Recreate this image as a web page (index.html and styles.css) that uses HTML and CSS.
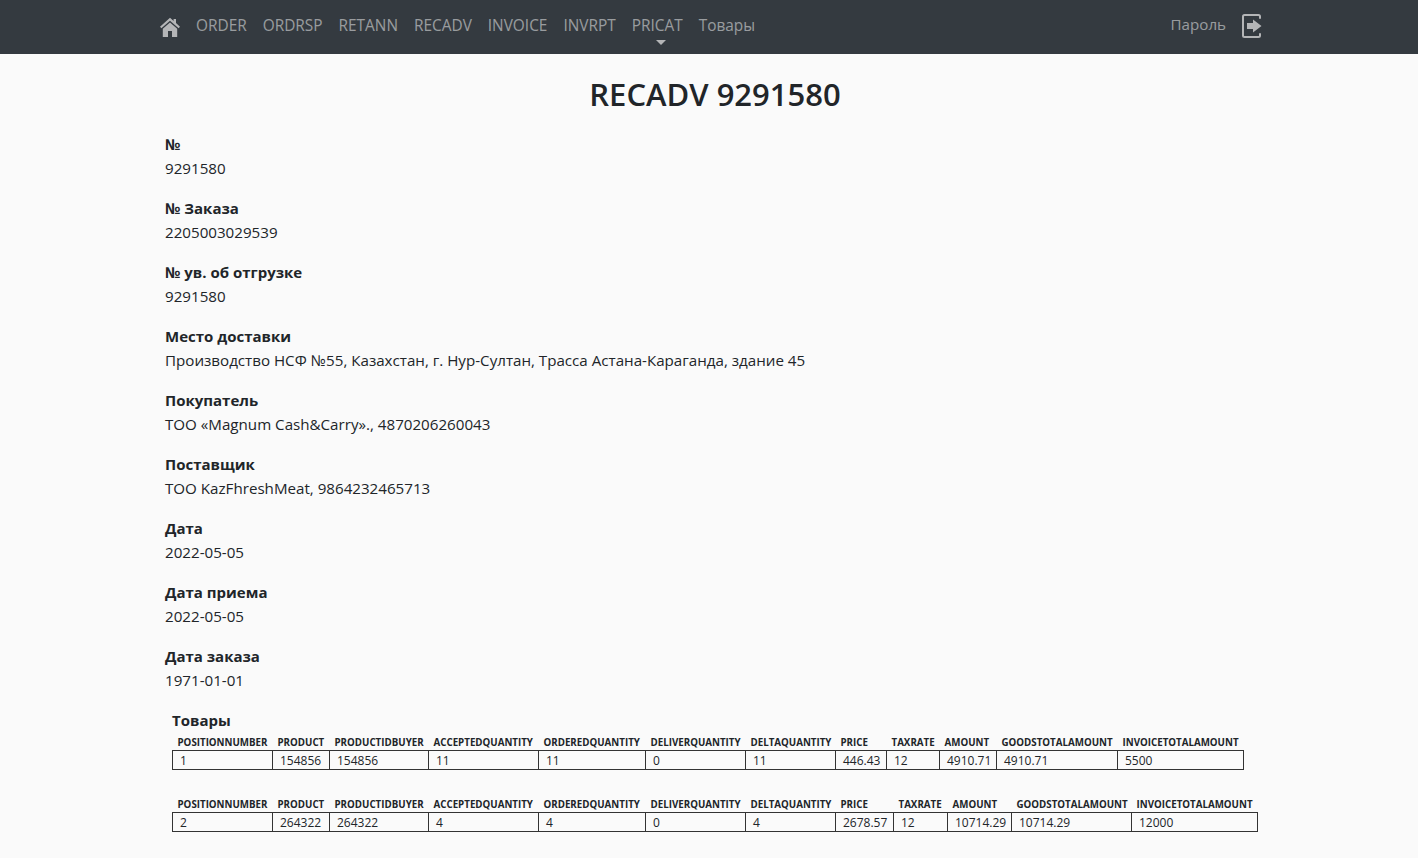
FILE: index.html
```html
<!DOCTYPE html>
<html lang="ru">
<head>
<meta charset="utf-8">
<title>RECADV 9291580</title>
<link rel="stylesheet" href="styles.css">
</head>
<body>
<nav class="navbar">
  <a class="home" href="#" aria-label="Home">
    <svg viewBox="0 0 20 20" width="20" height="20"><path fill="#b4b5b7" d="M10 0.8 L13.6 4 V2 H16 V6.1 L20 9.7 L18.6 11.3 L10 3.7 L1.4 11.3 L0 9.7 Z M10 5.4 L17.2 11.7 V20 H12 V14 H8 V20 H2.8 V11.7 Z"/></svg>
  </a>
  <ul class="menu">
    <li><a href="#">ORDER</a></li>
    <li><a href="#">ORDRSP</a></li>
    <li><a href="#">RETANN</a></li>
    <li><a href="#">RECADV</a></li>
    <li><a href="#">INVOICE</a></li>
    <li><a href="#">INVRPT</a></li>
    <li class="dropdown"><a href="#">PRICAT</a></li>
    <li><a href="#">Товары</a></li>
  </ul>
  <div class="account">
    <a href="#">Пароль</a>
    <svg viewBox="0 0 20 24" width="20" height="24"><path fill="none" stroke="#b4b5b7" stroke-width="2" stroke-linecap="round" stroke-linejoin="round" d="M18 4 V2.5 Q18 1 16.5 1 H2.5 Q1 1 1 2.5 V21.5 Q1 23 2.5 23 H16.5 Q18 23 18 21.500 V20"/><path fill="#b4b5b7" d="M5 9 H11 V5.500 L19.500 12 L11 18.500 V15 H5 Z"/></svg>
  </div>
</nav>
<main class="content">
  <h1>RECADV 9291580</h1>
  <dl class="details">
    <dt>№</dt><dd>9291580</dd>
    <dt>№ Заказа</dt><dd>2205003029539</dd>
    <dt>№ ув. об отгрузке</dt><dd>9291580</dd>
    <dt>Место доставки</dt><dd>Производство НСФ №55, Казахстан, г. Нур-Султан, Трасса Астана-Караганда, здание 45</dd>
    <dt>Покупатель</dt><dd>ТОО «Magnum Cash&amp;Carry»., 4870206260043</dd>
    <dt>Поставщик</dt><dd>ТОО KazFhreshMeat, 9864232465713</dd>
    <dt>Дата</dt><dd>2022-05-05</dd>
    <dt>Дата приема</dt><dd>2022-05-05</dd>
    <dt>Дата заказа</dt><dd>1971-01-01</dd>
  </dl>
  <section class="goods">
    <h2>Товары</h2>
    <table class="first">
      <colgroup><col class="c1"><col class="c2"><col class="c3"><col class="c4"><col class="c5"><col class="c6"><col class="c7"><col class="c8"><col class="c9"><col class="c10"><col class="c11"><col class="c12"></colgroup>
      <thead><tr><th>POSITIONNUMBER</th><th>PRODUCT</th><th>PRODUCTIDBUYER</th><th>ACCEPTEDQUANTITY</th><th>ORDEREDQUANTITY</th><th>DELIVERQUANTITY</th><th>DELTAQUANTITY</th><th>PRICE</th><th>TAXRATE</th><th>AMOUNT</th><th>GOODSTOTALAMOUNT</th><th>INVOICETOTALAMOUNT</th></tr></thead>
      <tbody><tr><td>1</td><td>154856</td><td>154856</td><td>11</td><td>11</td><td>0</td><td>11</td><td>446.43</td><td>12</td><td>4910.71</td><td>4910.71</td><td>5500</td></tr></tbody>
    </table>
    <table class="second">
      <colgroup><col class="c1"><col class="c2"><col class="c3"><col class="c4"><col class="c5"><col class="c6"><col class="c7"><col class="c8"><col class="c9"><col class="c10"><col class="c11"><col class="c12"></colgroup>
      <thead><tr><th>POSITIONNUMBER</th><th>PRODUCT</th><th>PRODUCTIDBUYER</th><th>ACCEPTEDQUANTITY</th><th>ORDEREDQUANTITY</th><th>DELIVERQUANTITY</th><th>DELTAQUANTITY</th><th>PRICE</th><th>TAXRATE</th><th>AMOUNT</th><th>GOODSTOTALAMOUNT</th><th>INVOICETOTALAMOUNT</th></tr></thead>
      <tbody><tr><td>2</td><td>264322</td><td>264322</td><td>4</td><td>4</td><td>0</td><td>4</td><td>2678.57</td><td>12</td><td>10714.29</td><td>10714.29</td><td>12000</td></tr></tbody>
    </table>
  </section>
</main>
</body>
</html>
```
FILE: styles.css
```css
* { box-sizing: border-box; }
html, body { margin: 0; padding: 0; }
body {
  background: #fafafa;
  color: #212529;
  font-family: "Open Sans", "Noto Sans", sans-serif;
  font-size: 15.15px;
  line-height: 24px;
  overflow: hidden;
  height: 858px;
}
a { color: inherit; text-decoration: none; }

.navbar {
  display: flex;
  align-items: center;
  height: 54px;
  padding: 0 156px 0 160px;
  background: #343a40;
  color: rgba(255, 255, 255, 0.5);
  font-size: 15.4px;
}
.home { display: flex; margin-right: 8px; }
.menu {
  display: flex;
  list-style: none;
  margin: 0 0 3px;
  padding: 0;
}
.menu li { padding: 0 8px; position: relative; }
.dropdown::after {
  content: "";
  position: absolute;
  left: 50%;
  top: 26px;
  margin-left: -1px;
  border-style: solid;
  border-width: 5px 5px 0;
  border-color: #b4b5b7 transparent transparent;
}
.account {
  margin-left: auto;
  display: flex;
  align-items: center;
  gap: 16px;
  font-size: 15.15px;
}
.account a { margin-bottom: 6px; }
.account svg { margin-bottom: 2px; }

.content { padding: 21px 153px 0 165px; }
h1 {
  margin: 0 0 19px;
  font-size: 31px;
  line-height: 38px;
  font-weight: 600;
  text-align: center;
}
.details { margin: 0; }
.details dt { font-weight: 700; font-size: 15px; }
.details dd { margin: 0 0 16px; }

.goods { padding-left: 7px; }
h2 {
  margin: 1px 0 2px;
  font-size: 15px;
  line-height: 24px;
  font-weight: 700;
}
table {
  table-layout: fixed;
  border-collapse: collapse;
  margin-bottom: 26px;
}
table.first { width: 1071px; }
table.second { width: 1085px; }
th {
  padding: 1px 0 0 5px;
  font-size: 9.75px;
  line-height: 15px;
  font-weight: 700;
  text-align: left;
  white-space: nowrap;
}
td {
  padding: 1px 0 0 7px;
  border: 1px solid #333;
  font-size: 12px;
  line-height: 17px;
  white-space: nowrap;
}
.c1 { width: 100px; }
.c2 { width: 57px; }
.c3 { width: 99px; }
.c4 { width: 110px; }
.c5 { width: 107px; }
.c6 { width: 100px; }
.c7 { width: 90px; }
.first .c8 { width: 51px; }
.first .c9 { width: 53px; }
.first .c10 { width: 57px; }
.first .c11 { width: 121px; }
.first .c12 { width: 126px; }
.second .c8 { width: 58px; }
.second .c9 { width: 54px; }
.second .c10 { width: 64px; }
.second .c11 { width: 120px; }
.second .c12 { width: 126px; }
```
